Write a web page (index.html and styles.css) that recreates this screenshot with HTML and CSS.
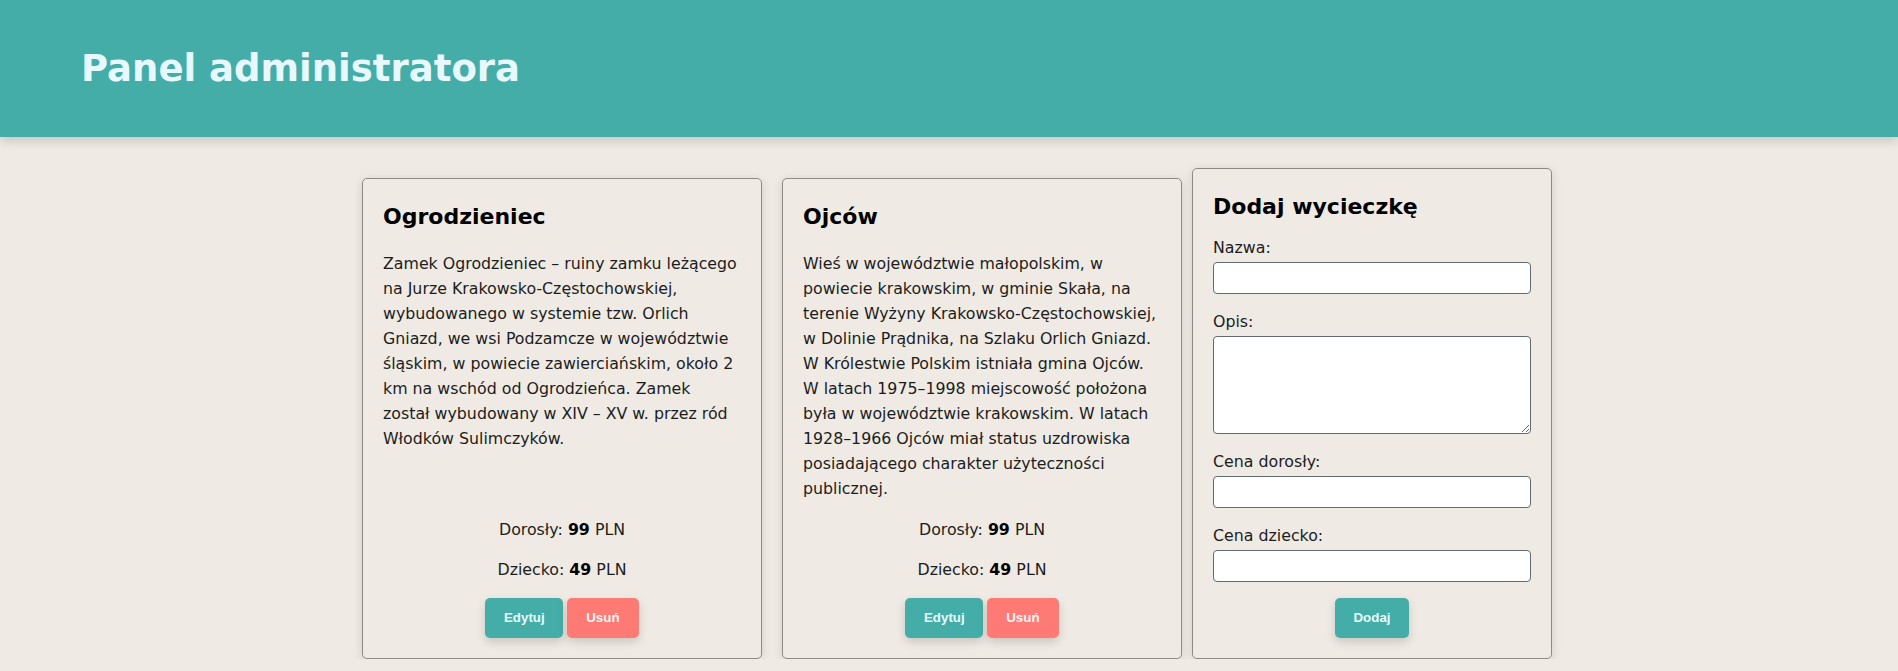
FILE: index.html
```html
<!DOCTYPE html>
<html lang="pl">
<head>
<meta charset="utf-8">
<title>Panel administratora</title>
<link rel="stylesheet" href="styles.css">
</head>
<body>
<header class="topbar">
  <h1 class="topbar-title">Panel administratora</h1>
</header>
<main class="content">
  <section class="trips">
    <article class="card">
      <h2 class="card-title">Ogrodzieniec</h2>
      <p class="card-desc">Zamek Ogrodzieniec – ruiny zamku leżącego na Jurze Krakowsko-Częstochowskiej, wybudowanego w systemie tzw. Orlich Gniazd, we wsi Podzamcze w województwie śląskim, w powiecie zawierciańskim, około 2 km na wschód od Ogrodzieńca. Zamek został wybudowany w XIV – XV w. przez ród Włodków Sulimczyków.</p>
      <p class="price price-first">Dorosły: <b>99</b> PLN</p>
      <p class="price">Dziecko: <b>49</b> PLN</p>
      <div class="actions">
        <button class="btn btn-edit">Edytuj</button>
        <button class="btn btn-delete">Usuń</button>
      </div>
    </article>
    <article class="card">
      <h2 class="card-title">Ojców</h2>
      <p class="card-desc">Wieś w województwie małopolskim, w powiecie krakowskim, w gminie Skała, na terenie Wyżyny Krakowsko-Częstochowskiej, w Dolinie Prądnika, na Szlaku Orlich Gniazd. W Królestwie Polskim istniała gmina Ojców. W latach 1975–1998 miejscowość położona była w województwie krakowskim. W latach 1928–1966 Ojców miał status uzdrowiska posiadającego charakter użyteczności publicznej.</p>
      <p class="price price-first">Dorosły: <b>99</b> PLN</p>
      <p class="price">Dziecko: <b>49</b> PLN</p>
      <div class="actions">
        <button class="btn btn-edit">Edytuj</button>
        <button class="btn btn-delete">Usuń</button>
      </div>
    </article>
  </section>
  <form class="card form-card">
    <h2 class="card-title form-title">Dodaj wycieczkę</h2>
    <label class="field-label" for="nazwa">Nazwa:</label>
    <input class="field-input" id="nazwa" type="text">
    <label class="field-label" for="opis">Opis:</label>
    <textarea class="field-input field-area" id="opis"></textarea>
    <label class="field-label" for="dorosly">Cena dorosły:</label>
    <input class="field-input" id="dorosly" type="text">
    <label class="field-label" for="dziecko">Cena dziecko:</label>
    <input class="field-input" id="dziecko" type="text">
    <div class="actions">
      <button class="btn btn-edit" type="button">Dodaj</button>
    </div>
  </form>
</main>
</body>
</html>
```
FILE: styles.css
```css
* {
  box-sizing: border-box;
}

body {
  margin: 0;
  background: #efebe4;
  font-family: "DejaVu Sans", "Liberation Sans", sans-serif;
  color: #1c1c1c;
}

.topbar {
  height: 137px;
  background: #45ada8;
  display: flex;
  align-items: center;
  padding-left: 81px;
  box-shadow: 0 4px 10px rgba(0, 0, 0, 0.16);
  position: relative;
}

.topbar-title {
  margin: 0;
  font-size: 37px;
  font-weight: bold;
  color: #e8f8ff;
}

.content {
  display: flex;
  justify-content: center;
  align-items: flex-start;
  padding: 31px 0 0 16px;
}

.trips {
  display: flex;
  gap: 20px;
  margin-top: 10px;
}

.card {
  background: #efebe4;
  border: 1px solid #8e8b87;
  border-radius: 5px;
  box-shadow: 0 2px 10px rgba(0, 0, 0, 0.13);
  padding: 20px;
}

.trips .card {
  width: 400px;
  display: flex;
  flex-direction: column;
}

.card-title {
  margin: 0 0 17px;
  font-size: 22px;
  line-height: 35px;
  font-weight: bold;
  color: #000;
}

.card-desc {
  margin: 0;
  font-size: 15.8px;
  line-height: 25px;
}

.price {
  margin: 0 0 15px;
  font-size: 15.8px;
  line-height: 25px;
  text-align: center;
}

.price b {
  font-weight: bold;
  color: #000;
}

.price-first {
  margin-top: auto;
  padding-top: 16px;
}

.actions {
  display: flex;
  justify-content: center;
  gap: 4px;
  margin-top: 1px;
}

.btn {
  font-family: "Liberation Sans", Arial, sans-serif;
  font-size: 13.33px;
  font-weight: bold;
  line-height: 16px;
  height: 40px;
  padding: 12px 18.5px;
  border: none;
  border-radius: 5px;
  color: #e6fbff;
  box-shadow: 0 4px 10px rgba(0, 0, 0, 0.16);
}

.btn-edit {
  background: #45ada8;
}

.btn-delete {
  background: #fe7a74;
  color: #fff6f6;
  padding: 12px 19px;
}

.form-card {
  width: 360px;
  margin: 0 0 0 10px;
}

.form-title {
  margin-bottom: 12px;
}

.field-label {
  display: block;
  font-size: 15.8px;
  line-height: 24px;
  margin-bottom: 2px;
}

.field-input {
  display: block;
  width: 100%;
  height: 32px;
  margin: 0 0 16px;
  background: #fff;
  border: 1px solid #5f6e6d;
  border-radius: 4px;
}

.field-area {
  height: 98px;
}
```
